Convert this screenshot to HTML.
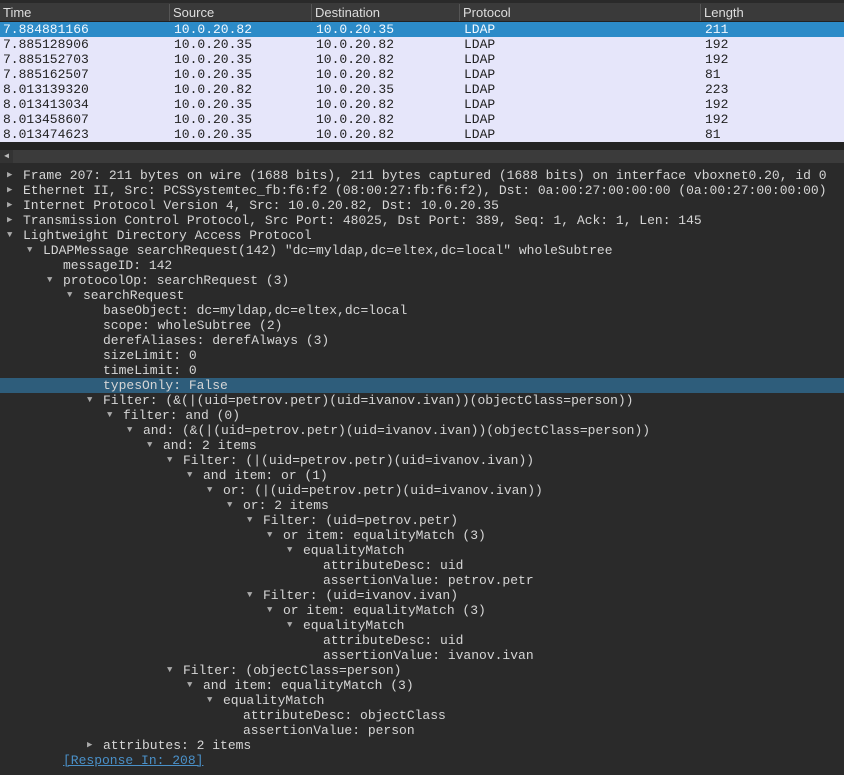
<!DOCTYPE html><html><head><style>
body{margin:0;width:844px;height:775px;background:#2a2a2a;overflow:hidden;font-family:"Liberation Mono",monospace;font-size:13px}
.top{position:absolute;left:0;top:0;width:844px;height:3px;background:#2a2a2a}
.hdr{position:absolute;top:3px;left:0;width:844px;height:18px;background:#3a3a3a;border-bottom:1px solid #222;font-family:"Liberation Sans",sans-serif;font-size:13px;color:#ddd}
.hdr span{position:absolute;top:1px;line-height:17px;padding-left:3px;border-left:1px solid #555;height:17px}
.row{position:absolute;left:0;width:844px;height:15px;background:#e6e6fa;color:#222;line-height:15px}
.row.sel{background:#2c8bc8;color:#f0f8ff}
.row span{position:absolute;top:0}
.sb{position:absolute;top:150px;left:0;width:844px;height:13px;background:#3b3b3b}
.tree{position:absolute;top:168px;left:0;width:844px}
.t{height:15px;line-height:15px;color:#d6d6d6;white-space:pre;position:relative}
.t.s{background:#2e5d7b}
.a{position:absolute;top:0;font-size:9px;color:#aaa}
.link{color:#4a90c8;text-decoration:underline}
</style></head><body>
<div class="top"></div>
<div class="hdr"><span style="left:0;border:none">Time</span><span style="left:169px">Source</span><span style="left:311px">Destination</span><span style="left:459px">Protocol</span><span style="left:700px">Length</span></div>
<div style="position:absolute;top:142px;left:0;width:844px;height:8px;background:#232323"></div>
<div class="sb"><div style="position:absolute;left:0;top:0;width:13px;height:13px;background:#333;color:#bbb;font-size:8px;line-height:13px;text-align:center">◀</div></div>
<script>
var d=[["7.884881166","10.0.20.82","10.0.20.35","211"],["7.885128906","10.0.20.35","10.0.20.82","192"],["7.885152703","10.0.20.35","10.0.20.82","192"],["7.885162507","10.0.20.35","10.0.20.82","81"],["8.013139320","10.0.20.82","10.0.20.35","223"],["8.013413034","10.0.20.35","10.0.20.82","192"],["8.013458607","10.0.20.35","10.0.20.82","192"],["8.013474623","10.0.20.35","10.0.20.82","81"]];
var h="";d.forEach(function(r,i){h+='<div class="row'+(i==0?' sel':'')+'" style="top:'+(22+i*15)+'px"><span style="left:3px">'+r[0]+'</span><span style="left:174px">'+r[1]+'</span><span style="left:316px">'+r[2]+'</span><span style="left:464px">LDAP</span><span style="left:705px">'+r[3]+'</span></div>';});
document.write(h);
</script>
<div class="tree">
<script>
var t=[[0,"r","Frame 207: 211 bytes on wire (1688 bits), 211 bytes captured (1688 bits) on interface vboxnet0.20, id 0"],[0,"r","Ethernet II, Src: PCSSystemtec_fb:f6:f2 (08:00:27:fb:f6:f2), Dst: 0a:00:27:00:00:00 (0a:00:27:00:00:00)"],[0,"r","Internet Protocol Version 4, Src: 10.0.20.82, Dst: 10.0.20.35"],[0,"r","Transmission Control Protocol, Src Port: 48025, Dst Port: 389, Seq: 1, Ack: 1, Len: 145"],[0,"d","Lightweight Directory Access Protocol"],[1,"d",'LDAPMessage searchRequest(142) "dc=myldap,dc=eltex,dc=local" wholeSubtree'],[2,"","messageID: 142"],[2,"d","protocolOp: searchRequest (3)"],[3,"d","searchRequest"],[4,"","baseObject: dc=myldap,dc=eltex,dc=local"],[4,"","scope: wholeSubtree (2)"],[4,"","derefAliases: derefAlways (3)"],[4,"","sizeLimit: 0"],[4,"","timeLimit: 0"],[4,"","typesOnly: False",1],[4,"d","Filter: (&(|(uid=petrov.petr)(uid=ivanov.ivan))(objectClass=person))"],[5,"d","filter: and (0)"],[6,"d","and: (&(|(uid=petrov.petr)(uid=ivanov.ivan))(objectClass=person))"],[7,"d","and: 2 items"],[8,"d","Filter: (|(uid=petrov.petr)(uid=ivanov.ivan))"],[9,"d","and item: or (1)"],[10,"d","or: (|(uid=petrov.petr)(uid=ivanov.ivan))"],[11,"d","or: 2 items"],[12,"d","Filter: (uid=petrov.petr)"],[13,"d","or item: equalityMatch (3)"],[14,"d","equalityMatch"],[15,"","attributeDesc: uid"],[15,"","assertionValue: petrov.petr"],[12,"d","Filter: (uid=ivanov.ivan)"],[13,"d","or item: equalityMatch (3)"],[14,"d","equalityMatch"],[15,"","attributeDesc: uid"],[15,"","assertionValue: ivanov.ivan"],[8,"d","Filter: (objectClass=person)"],[9,"d","and item: equalityMatch (3)"],[10,"d","equalityMatch"],[11,"","attributeDesc: objectClass"],[11,"","assertionValue: person"],[4,"r","attributes: 2 items"],[2,"l","[Response In: 208]"]];
var h="";t.forEach(function(r){var x=23+r[0]*20;var a=r[1]=="r"?"▶":r[1]=="d"?"▼":"";var txt=r[1]=="l"?'<span class="link">'+r[2]+'</span>':r[2].replace(/&/g,"&amp;");h+='<div class="t'+(r[3]?' s':'')+'">'+(a?'<span class="a" style="left:'+(x-16)+'px">'+a+'</span>':'')+'<span style="position:absolute;left:'+x+'px">'+txt+'</span></div>';});
document.write(h);
</script>
</div>
</body></html>
